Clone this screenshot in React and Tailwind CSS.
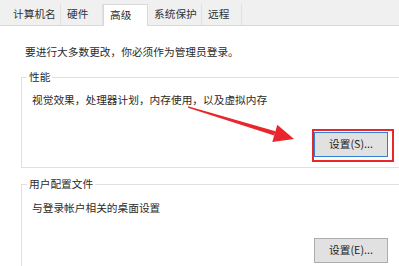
import React from "react";

const tabs = [
  { label: "计算机名", w: "w-[54px]" },
  { label: "硬件", w: "w-[42px]" },
  { label: "高级", w: "w-[45px]", active: true },
  { label: "系统保护", w: "w-[54px]" },
  { label: "远程", w: "w-[40px]" },
];

function Button({ children, focused }) {
  return (
    <div
      className={
        "w-[74px] h-[25px] flex items-center justify-center bg-[#e1e1e1] text-[10.7px] text-[#222] leading-none border " +
        (focused ? "border-[#2f7fd6]" : "border-[#adadad]")
      }
    >
      {children}
    </div>
  );
}

export default function App() {
  return (
    <div
      className="relative w-[399px] h-[266px] overflow-hidden bg-white text-[#2a2a2a]"
      style={{ fontFamily: '"Noto Sans CJK SC", "Noto Sans", sans-serif' }}
    >
      {/* tab strip */}
      <div className="h-[26px] bg-[#f0f0f0] border-b border-[#d9d9d9] flex items-end pl-[7px]">
        {tabs.map((t) =>
          t.active ? (
            <div
              key={t.label}
              className={
                t.w +
                " h-[22px] -mb-px bg-white border-x border-t border-[#d9d9d9] pl-[6px] flex items-center text-[10.7px] leading-none"
              }
            >
              {t.label}
            </div>
          ) : (
            <div
              key={t.label}
              className={
                t.w +
                " h-[21px] border-r border-[#e0e0e0] pl-[6px] flex items-center text-[10.7px] leading-none text-[#333]"
              }
            >
              {t.label}
            </div>
          )
        )}
      </div>

      <div className="pl-[25px] mt-[19px] text-[10.7px] leading-[14px]">
        要进行大多数更改，你必须作为管理员登录。
      </div>

      <fieldset className="ml-[21px] mt-[11px] w-[390px] border border-[#e0e0e0] pb-[10px]">
        <legend className="ml-[5px] px-[2px] text-[10.7px] leading-[14px]">性能</legend>
        <div className="pl-[10px] mt-[9px] text-[10.7px] leading-[14px]">
          视觉效果，处理器计划，内存使用，以及虚拟内存
        </div>
        <div className="flex justify-end pr-[22px] mt-[25px]">
          <Button focused>设置(S)...</Button>
        </div>
      </fieldset>

      <fieldset className="ml-[21px] mt-[9px] w-[390px] h-[120px] border border-[#e0e0e0]">
        <legend className="ml-[5px] px-[2px] text-[10.7px] leading-[14px]">用户配置文件</legend>
        <div className="pl-[10px] mt-[10px] text-[10.7px] leading-[14px]">
          与登录帐户相关的桌面设置
        </div>
        <div className="flex justify-end pr-[22px] mt-[23px]">
          <Button>设置(E)...</Button>
        </div>
      </fieldset>

      {/* red highlight annotation */}
      <div className="absolute left-[312px] top-[129px] w-[82px] h-[33px] border-2 border-[#e8262b]" />

      {/* red arrow annotation */}
      <svg className="absolute left-0 top-0" width="399" height="266" viewBox="0 0 399 266">
        <polygon points="188,106.3 275.4,131.2 274.2,135.4 188,107.7" fill="#e8262b" />
        <polygon points="277.3,124.7 294,139 272.3,141.9" fill="#e8262b" />
      </svg>
    </div>
  );
}
